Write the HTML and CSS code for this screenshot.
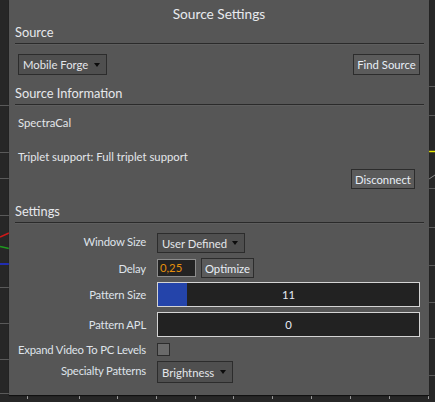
FILE: index.html
```html
<!DOCTYPE html>
<html>
<head>
<meta charset="utf-8">
<link rel="stylesheet" href="styles.css">
</head>
<body>
<svg class="canvas" width="435" height="402" viewBox="0 0 435 402">
  <g stroke="#5a5a5a" stroke-width="1">
    <line x1="0" y1="105.5" x2="9" y2="105.5"/>
    <line x1="0" y1="152.5" x2="9" y2="152.5"/>
    <line x1="0" y1="178.5" x2="9" y2="178.5"/>
    <line x1="0" y1="215.5" x2="9" y2="215.5"/>
    <line x1="0" y1="287.5" x2="9" y2="287.5"/>
    <line x1="0" y1="323.5" x2="9" y2="323.5"/>
    <line x1="0" y1="359.5" x2="9" y2="359.5"/>
    <line x1="0" y1="393.5" x2="9" y2="393.5"/>
    <line x1="429" y1="86.5" x2="435" y2="86.5"/>
    <line x1="429" y1="115.5" x2="435" y2="115.5"/>
    <line x1="429" y1="188.5" x2="435" y2="188.5"/>
    <line x1="429" y1="227.5" x2="435" y2="227.5"/>
    <line x1="429" y1="265.5" x2="435" y2="265.5"/>
    <line x1="429" y1="302.5" x2="435" y2="302.5"/>
    <line x1="429" y1="338.5" x2="435" y2="338.5"/>
    <line x1="429" y1="375.5" x2="435" y2="375.5"/>
  </g>
  <line x1="0" y1="237" x2="9" y2="233" stroke="#d01818" stroke-width="1.5"/>
  <line x1="0" y1="246.5" x2="9" y2="248.5" stroke="#1f9a1f" stroke-width="1.5"/>
  <line x1="0" y1="264" x2="9" y2="264" stroke="#2030e0" stroke-width="1.5"/>
  <line x1="429" y1="151.5" x2="435" y2="151.5" stroke="#e8e800" stroke-width="1.5"/>
  <line x1="429" y1="179" x2="435" y2="175" stroke="#8a8a8a" stroke-width="1"/>
  <g stroke="#9a9a9a" stroke-width="1">
    <line x1="27.5" y1="396" x2="27.5" y2="399"/>
    <line x1="79.5" y1="396" x2="79.5" y2="399"/>
    <line x1="117.5" y1="396" x2="117.5" y2="399"/>
    <line x1="156.5" y1="396" x2="156.5" y2="399"/>
    <line x1="195.5" y1="396" x2="195.5" y2="399"/>
    <line x1="233.5" y1="396" x2="233.5" y2="399"/>
    <line x1="272.5" y1="396" x2="272.5" y2="399"/>
    <line x1="311.5" y1="396" x2="311.5" y2="399"/>
    <line x1="350.5" y1="396" x2="350.5" y2="399"/>
    <line x1="389.5" y1="396" x2="389.5" y2="399"/>
    <line x1="428.5" y1="396" x2="428.5" y2="399"/>
  </g>
</svg>

<div class="panel">
  <div class="title">Source Settings</div>

  <div class="sect">Source</div>
  <div class="src-row">
    <div class="dropdown dd-source"><span>Mobile Forge</span><i class="caret"></i></div>
    <div class="btn btn-find">Find Source</div>
  </div>

  <div class="sect sect-info">Source Information</div>
  <div class="info info-name">SpectraCal</div>
  <div class="info info-triplet">Triplet support: Full triplet support</div>
  <div class="disc-row"><div class="btn btn-disc">Disconnect</div></div>

  <div class="sect sect-settings">Settings</div>
  <div class="settings">
    <div class="row row-window">
      <div class="lbl lbl-up">Window Size</div>
      <div class="dropdown dd-window"><span>User Defined</span><i class="caret"></i></div>
    </div>
    <div class="row row-delay">
      <div class="lbl">Delay</div>
      <div class="ctl-delay"><div class="input">0,25</div><div class="btn btn-opt">Optimize</div></div>
    </div>
    <div class="row row-bar">
      <div class="lbl">Pattern Size</div>
      <div class="bar"><div class="fill" style="width: 29px"></div><span>11</span></div>
    </div>
    <div class="row row-bar2">
      <div class="lbl">Pattern APL</div>
      <div class="bar"><span>0</span></div>
    </div>
    <div class="row row-check">
      <div class="lbl">Expand Video To PC Levels</div>
      <div class="check"></div>
    </div>
    <div class="row row-special">
      <div class="lbl lbl-up">Specialty Patterns</div>
      <div class="dropdown dd-special"><span>Brightness</span><i class="caret"></i></div>
    </div>
  </div>
</div>
</body>
</html>
```

FILE: styles.css
```css
html, body {
  margin: 0;
  padding: 0;
}
body {
  width: 435px;
  height: 402px;
  overflow: hidden;
  background: #272727;
  font-family: "Lato", "Open Sans", sans-serif;
  color: #e4e6ea;
  position: relative;
  padding-left: 9px;
  box-sizing: border-box;
  white-space: nowrap;
}
.canvas {
  position: absolute;
  left: 0;
  top: 0;
}
.panel {
  position: relative;
  width: 420px;
  height: 395px;
  background: #565656;
  box-shadow: 0 1px 1px rgba(0,0,0,0.55);
  box-sizing: border-box;
}
.title {
  height: 25px;
  line-height: 28px;
  text-align: center;
  font-size: 13.7px;
  color: #e8eaee;
}
.sect {
  height: 18px;
  line-height: 14px;
  font-size: 12.8px;
  margin: 0 5px 0 6px;
  border-bottom: 1px solid #2a2a2a;
  box-shadow: 0 1px 0 #5e5e5e;
  color: #e6e8ec;
}
.src-row {
  margin-top: 10px;
  height: 21px;
  display: flex;
  justify-content: space-between;
  padding: 0 9px;
}
.dropdown {
  box-sizing: border-box;
  height: 21px;
  border: 1px solid #2c2c2c;
  background: #4f4f4f;
  display: flex;
  align-items: center;
  justify-content: space-between;
  padding: 0 6px 0 4px;
  font-size: 11.3px;
}
.dd-source { width: 89px; }
.dd-window { width: 88px; height: 20px; }
.dd-special { width: 76px; height: 22px; }
.caret {
  width: 0;
  height: 0;
  border-left: 3.5px solid transparent;
  border-right: 3.5px solid transparent;
  border-top: 4px solid #0c0c0c;
}
.btn {
  box-sizing: border-box;
  height: 21px;
  border: 1px solid #2c2c2c;
  background: #5b5b5b;
  display: flex;
  align-items: center;
  justify-content: center;
  font-size: 11.3px;
  color: #e8eef6;
}
.btn-find { width: 67px; }
.sect-info { margin-top: 11px; }
.info {
  font-size: 11.3px;
  line-height: 16px;
  padding-left: 9px;
}
.info-name { margin-top: 10px; }
.info-triplet { margin-top: 18px; }
.disc-row {
  margin-top: 4px;
  display: flex;
  justify-content: flex-end;
  padding-right: 14px;
}
.btn-disc { width: 64px; height: 20px; }
.sect-settings { margin-top: 15px; }

.settings {
  margin-top: 10px;
  padding-right: 9px;
  font-size: 11.3px;
}
.row {
  display: flex;
  align-items: center;
  gap: 11px;
}
.row-window { height: 20px; }
.row-delay { height: 20px; margin-top: 5px; }
.row-bar { height: 25px; margin-top: 4px; }
.row-bar2 { height: 25px; margin-top: 5px; }
.row-check { height: 17px; margin-top: 4px; }
.row-special { height: 22px; margin-top: 3px; }
.lbl {
  width: 137px;
  flex: none;
  text-align: right;
  letter-spacing: -0.2px;
  color: #dfe3ea;
}
.lbl-up { position: relative; top: -2px; }
.ctl-delay {
  display: flex;
  align-items: center;
  gap: 5px;
}
.input {
  box-sizing: border-box;
  width: 39px;
  height: 18px;
  border: 1px solid #8c8c8c;
  background: #232323;
  color: #e5900c;
  line-height: 16px;
  padding-left: 2px;
}
.btn-opt { width: 53px; height: 20px; }
.bar {
  position: relative;
  box-sizing: border-box;
  flex: 1;
  height: 25px;
  border: 1px solid #d4d4d4;
  background: #222222;
  display: flex;
  align-items: center;
  justify-content: center;
}
.fill {
  position: absolute;
  left: 0;
  top: 0;
  bottom: 0;
  background: #2444aa;
}
.bar span { position: relative; color: #e6ecf6; }
.check {
  box-sizing: border-box;
  width: 13px;
  height: 13px;
  border: 1px solid #2c2c2c;
  background: #6a6a6a;
}
```
